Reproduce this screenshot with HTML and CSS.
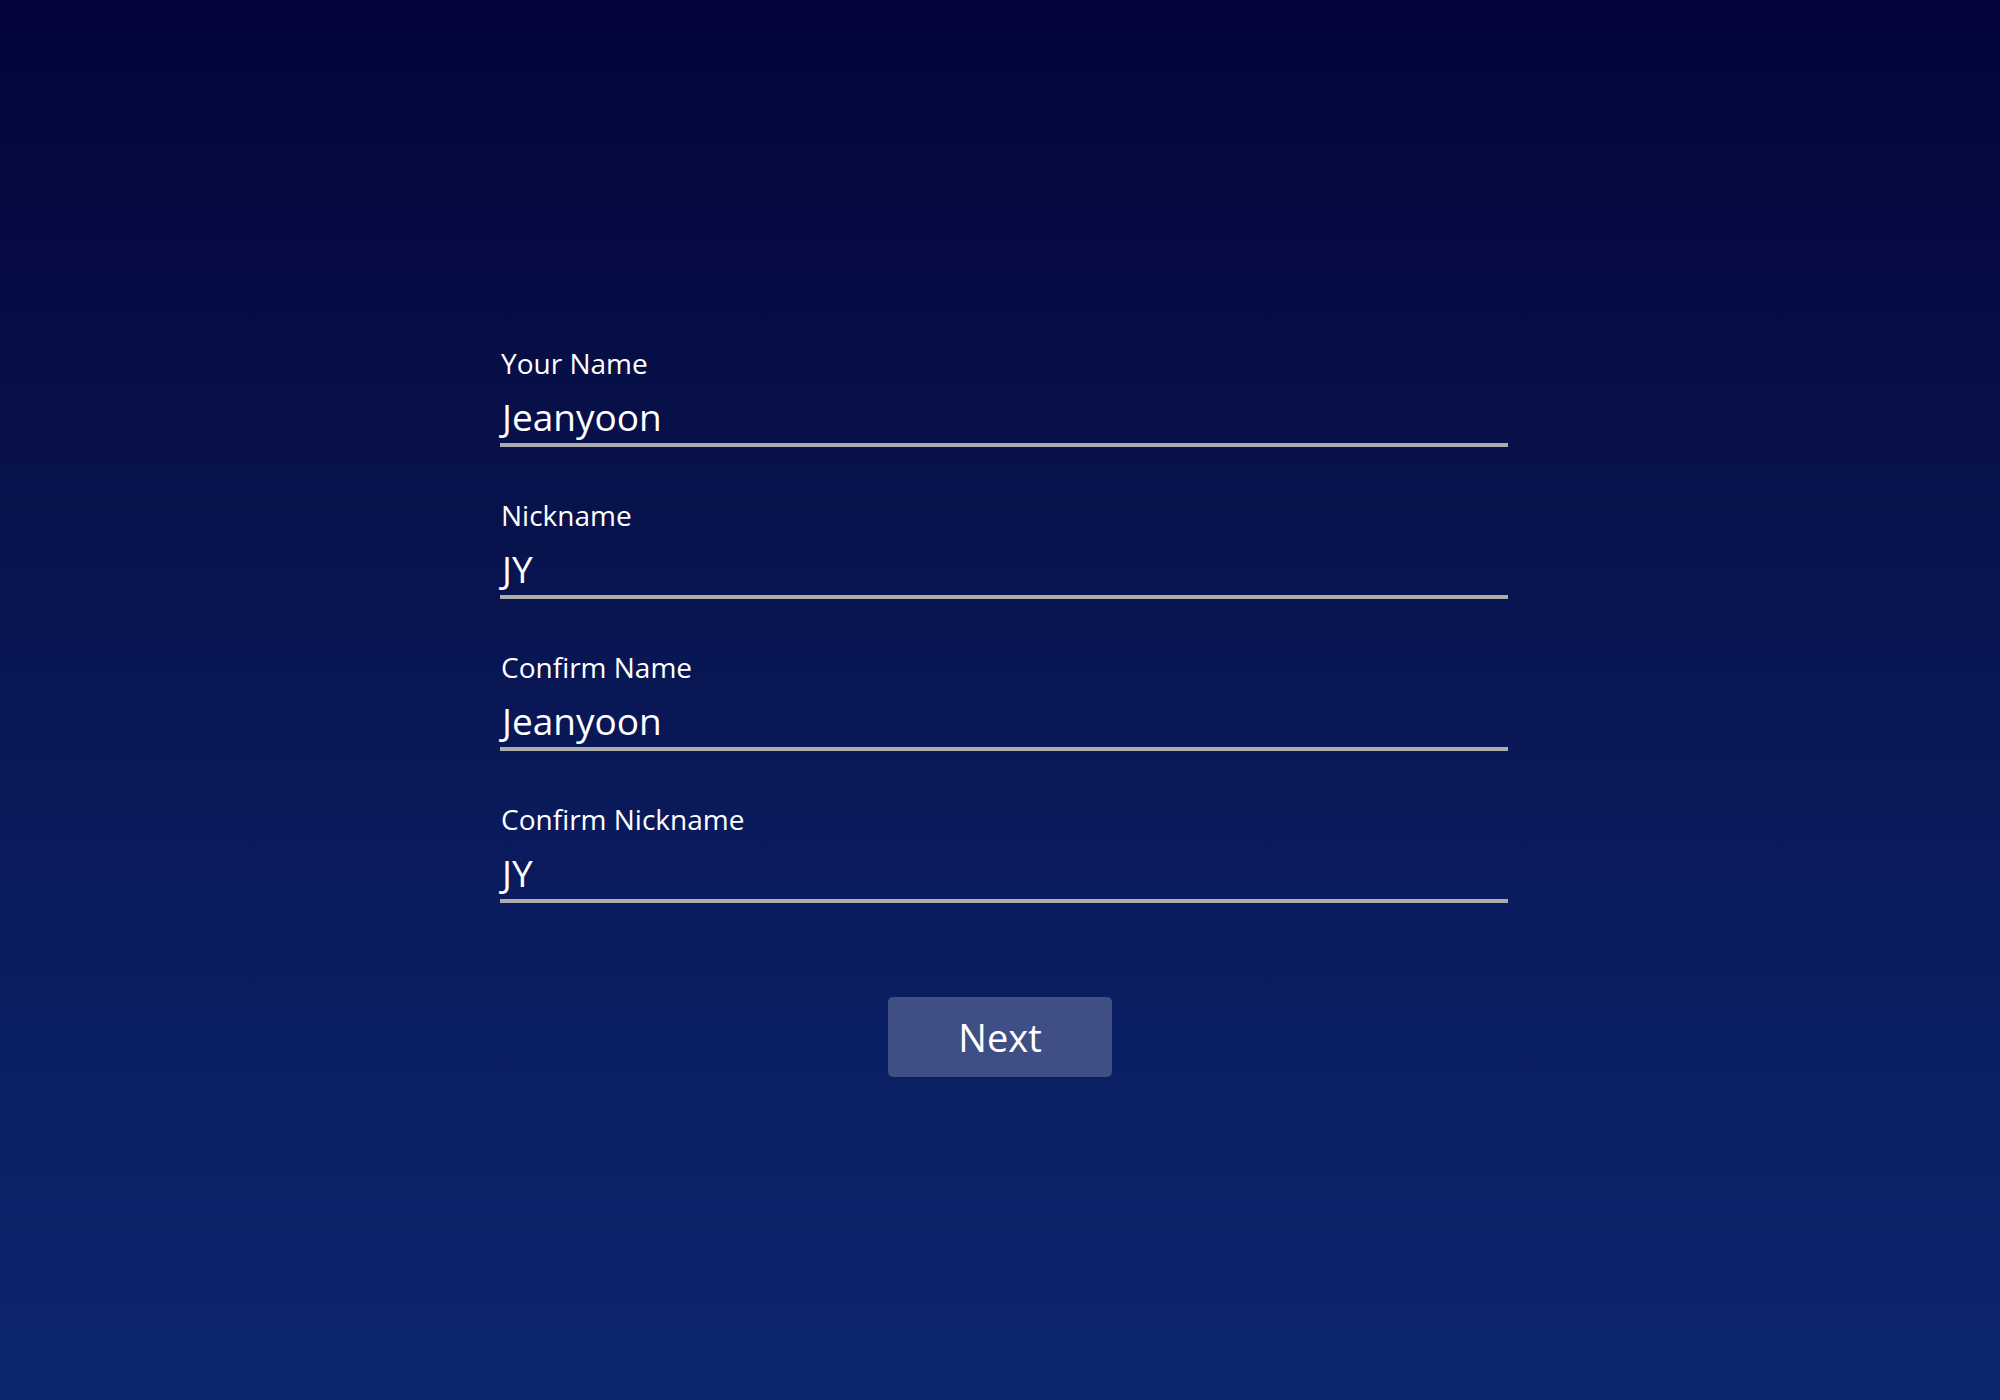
FILE: index.html
```html
<!DOCTYPE html>
<html>
<head>
<meta charset="utf-8">
<link rel="stylesheet" href="styles.css">
</head>
<body>
<div class="page">
  <form class="form">
    <div class="field">
      <div class="label">Your Name</div>
      <div class="value">Jeanyoon</div>
    </div>
    <div class="field">
      <div class="label">Nickname</div>
      <div class="value">JY</div>
    </div>
    <div class="field">
      <div class="label">Confirm Name</div>
      <div class="value">Jeanyoon</div>
    </div>
    <div class="field">
      <div class="label">Confirm Nickname</div>
      <div class="value">JY</div>
    </div>
  </form>
  <div class="actions">
    <button class="next" type="button">Next</button>
  </div>
</div>
</body>
</html>
```
FILE: styles.css
```css
html, body {
  margin: 0;
  padding: 0;
}
body {
  width: 2000px;
  height: 1400px;
  background: linear-gradient(180deg, #02043a 0%, #071048 30%, #0a1a5c 60%, #0c2670 100%);
  font-family: "Open Sans", "Noto Sans", sans-serif;
  color: #ffffff;
  overflow: hidden;
}
.page {
  padding-top: 345px;
}
.form {
  width: 1008px;
  margin-left: 500px;
  display: flex;
  flex-direction: column;
  gap: 50px;
}
.field {
  display: flex;
  flex-direction: column;
  border-bottom: 4px solid #acacac;
}
.label {
  font-size: 28px;
  line-height: 36px;
  height: 36px;
  padding-left: 1px;
}
.value {
  font-size: 37px;
  line-height: 48px;
  height: 48px;
  margin-top: 12px;
  margin-bottom: 2px;
  padding-left: 2px;
}
.actions {
  display: flex;
  justify-content: center;
  margin-top: 94px;
}
.next {
  width: 224px;
  height: 80px;
  border: none;
  border-radius: 5px;
  background: #3f4f86;
  color: #ffffff;
  font-family: "Open Sans", "Noto Sans", sans-serif;
  font-size: 38px;
  padding: 0;
}
```
